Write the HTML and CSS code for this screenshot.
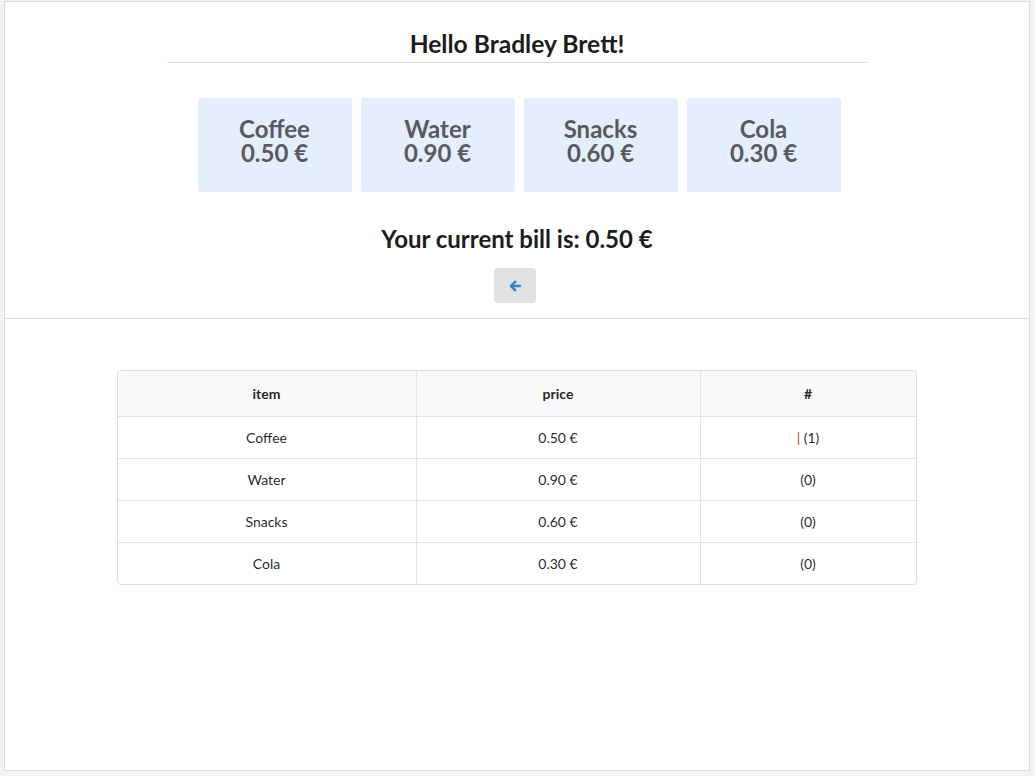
FILE: index.html
```html
<!DOCTYPE html>
<html>
<head>
<meta charset="utf-8">
<link rel="stylesheet" href="styles.css">
</head>
<body>
<div class="panel">
  <section class="top">
    <h2 class="greeting">Hello Bradley Brett!</h2>
    <div class="cards">
      <div class="card"><p class="card-text">Coffee<br>0.50 €</p></div>
      <div class="card"><p class="card-text">Water<br>0.90 €</p></div>
      <div class="card"><p class="card-text">Snacks<br>0.60 €</p></div>
      <div class="card"><p class="card-text">Cola<br>0.30 €</p></div>
    </div>
    <h2 class="bill">Your current bill is: 0.50 €</h2>
    <button class="back" type="button" aria-label="back">
      <svg width="14" height="14" viewBox="0 0 14 14"><path d="M12 7H3.5M7.2 2.8L3 7l4.2 4.2" fill="none" stroke="#3f82c6" stroke-width="2.6" stroke-linecap="round" stroke-linejoin="round"/></svg>
    </button>
  </section>
  <section class="bottom">
    <table class="items">
      <thead>
        <tr><th class="c1">item</th><th class="c2">price</th><th class="c3">#</th></tr>
      </thead>
      <tbody>
        <tr><td>Coffee</td><td>0.50 €</td><td><span class="tally">|</span> (1)</td></tr>
        <tr><td>Water</td><td>0.90 €</td><td>(0)</td></tr>
        <tr><td>Snacks</td><td>0.60 €</td><td>(0)</td></tr>
        <tr><td>Cola</td><td>0.30 €</td><td>(0)</td></tr>
      </tbody>
    </table>
  </section>
</div>
</body>
</html>
```

FILE: styles.css
```css
html, body {
  margin: 0;
  padding: 0;
}
body {
  background: #f3f3f3;
  font-family: Lato, "Helvetica Neue", Arial, sans-serif;
  color: rgba(0,0,0,0.87);
  font-size: 14px;
  padding: 1px 5px 5px 4px;
  height: 776px;
  box-sizing: border-box;
}
.panel {
  background: #fff;
  border: 1px solid #dcdcdc;
  height: 100%;
  box-sizing: border-box;
}
.top {
  border-bottom: 1px solid #dcdcdc;
  display: flex;
  flex-direction: column;
  align-items: center;
  padding-bottom: 15px;
}
.greeting {
  width: 700px;
  margin: 27px 0 0;
  padding-bottom: 3px;
  border-bottom: 1px solid #dedede;
  text-align: center;
  font-size: 24.6px;
  line-height: 30px;
  font-weight: 700;
  color: #1b1c1d;
}
.cards {
  display: flex;
  gap: 9px;
  margin-top: 35px;
  margin-left: 4px;
}
.card {
  width: 154px;
  height: 94px;
  background: #e4eefd;
  border-radius: 3px;
  display: flex;
  flex-direction: column;
  justify-content: center;
  align-items: center;
}
.card-text {
  margin: 0 0 8px;
  text-align: center;
  font-size: 24px;
  font-weight: 700;
  line-height: 24px;
  color: #5a5a5e;
}
.bill {
  margin: 31px 0 0;
  font-size: 24px;
  line-height: 32px;
  font-weight: 700;
  color: #1b1c1d;
}
.back {
  margin-top: 13px;
  margin-right: 4px;
  width: 42px;
  height: 35px;
  border: none;
  border-radius: 4px;
  background: #e0e1e2;
  display: flex;
  align-items: center;
  justify-content: center;
  padding: 0;
}
.back svg {
  display: block;
}
.bottom {
  padding-top: 51px;
  display: flex;
  justify-content: center;
}
.items {
  width: 800px;
  border-collapse: separate;
  border-spacing: 0;
  border: 1px solid #dcdddf;
  border-radius: 4px;
  margin-left: -1px;
}
.items th, .items td {
  text-align: center;
  border-left: 1px solid #e3e4e5;
  border-top: 1px solid #e3e4e5;
  padding: 0;
}
.items th:first-child, .items td:first-child {
  border-left: none;
}
.items thead th {
  border-top: none;
  background: #f9fafb;
  height: 45px;
  font-weight: 700;
  font-size: 14px;
}
.items thead th:first-child { border-top-left-radius: 4px; }
.items thead th:last-child { border-top-right-radius: 4px; }
.items td {
  height: 41px;
  font-size: 14px;
}
.c1 { width: 298px; }
.c2 { width: 283px; }
.tally {
  color: #c8421a;
}
```
